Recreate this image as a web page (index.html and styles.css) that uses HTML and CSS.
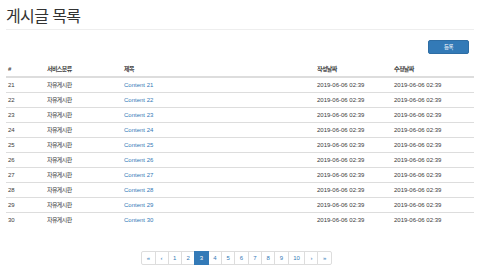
FILE: index.html
```html
<!DOCTYPE html>
<html lang="ko">
<head>
<meta charset="utf-8">
<title>게시글 목록</title>
<link rel="stylesheet" href="styles.css">
</head>
<body>
<div class="container">
  <h1 class="title">게시글 목록</h1>
  <hr class="divider">
  <div class="actions">
    <button class="btn-primary ko" type="button">등록</button>
  </div>
  <table class="board">
    <thead>
      <tr>
        <th class="c-no">#</th>
        <th class="c-cat ko">서비스분류</th>
        <th class="c-title ko">제목</th>
        <th class="c-date ko">작성날짜</th>
        <th class="c-mod ko">수정날짜</th>
      </tr>
    </thead>
    <tbody>
      <tr><td>21</td><td class="ko">자유게시판</td><td><a href="#">Content 21</a></td><td>2019-06-06 02:39</td><td>2019-06-06 02:39</td></tr>
      <tr><td>22</td><td class="ko">자유게시판</td><td><a href="#">Content 22</a></td><td>2019-06-06 02:39</td><td>2019-06-06 02:39</td></tr>
      <tr><td>23</td><td class="ko">자유게시판</td><td><a href="#">Content 23</a></td><td>2019-06-06 02:39</td><td>2019-06-06 02:39</td></tr>
      <tr><td>24</td><td class="ko">자유게시판</td><td><a href="#">Content 24</a></td><td>2019-06-06 02:39</td><td>2019-06-06 02:39</td></tr>
      <tr><td>25</td><td class="ko">자유게시판</td><td><a href="#">Content 25</a></td><td>2019-06-06 02:39</td><td>2019-06-06 02:39</td></tr>
      <tr><td>26</td><td class="ko">자유게시판</td><td><a href="#">Content 26</a></td><td>2019-06-06 02:39</td><td>2019-06-06 02:39</td></tr>
      <tr><td>27</td><td class="ko">자유게시판</td><td><a href="#">Content 27</a></td><td>2019-06-06 02:39</td><td>2019-06-06 02:39</td></tr>
      <tr><td>28</td><td class="ko">자유게시판</td><td><a href="#">Content 28</a></td><td>2019-06-06 02:39</td><td>2019-06-06 02:39</td></tr>
      <tr><td>29</td><td class="ko">자유게시판</td><td><a href="#">Content 29</a></td><td>2019-06-06 02:39</td><td>2019-06-06 02:39</td></tr>
      <tr><td>30</td><td class="ko">자유게시판</td><td><a href="#">Content 30</a></td><td>2019-06-06 02:39</td><td>2019-06-06 02:39</td></tr>
    </tbody>
  </table>
  <nav class="pager">
    <ul class="pagination">
      <li><a href="#">«</a></li>
      <li><a href="#">‹</a></li>
      <li><a href="#">1</a></li>
      <li><a href="#">2</a></li>
      <li class="active"><a href="#">3</a></li>
      <li><a href="#">4</a></li>
      <li><a href="#">5</a></li>
      <li><a href="#">6</a></li>
      <li><a href="#">7</a></li>
      <li><a href="#">8</a></li>
      <li><a href="#">9</a></li>
      <li><a href="#">10</a></li>
      <li><a href="#">›</a></li>
      <li><a href="#">»</a></li>
    </ul>
  </nav>
</div>
</body>
</html>
```

FILE: styles.css
```css
* { box-sizing: border-box; }
html, body { margin: 0; padding: 0; background: #fff; }
body {
  font-family: "Liberation Sans", Arial, "Noto Sans CJK KR", sans-serif;
  font-size: 6px;
  line-height: 8px;
  color: #3a3a3a;
}
.container { padding: 0 6px; }
.ko { letter-spacing: -0.6px; }
.title {
  margin: 5px 0 0;
  font-family: "Noto Sans CJK KR", sans-serif;
  font-size: 16px;
  line-height: 20px;
  font-weight: 400;
  letter-spacing: -0.6px;
  color: #333;
}
.divider {
  margin: 4px 0 0;
  border: 0;
  border-top: 1px solid #eee;
  height: 0;
}
.actions {
  display: flex;
  justify-content: flex-end;
  padding-right: 5px;
  margin-top: 10px;
}
.btn-primary {
  width: 41px;
  height: 14px;
  padding: 0;
  background: #337ab7;
  border: 1px solid #2e6da4;
  border-radius: 2px;
  color: #fff;
  font-family: "Liberation Sans", "Noto Sans CJK KR", sans-serif;
  font-size: 5.5px;
  line-height: 12px;
}
.board {
  width: 100%;
  margin-top: 8px;
  border-collapse: collapse;
  table-layout: fixed;
}
.board th, .board td {
  text-align: left;
  padding: 3px 2px;
  line-height: 8px;
  vertical-align: middle;
  white-space: nowrap;
}
.board th {
  font-weight: bold;
  color: #444;
  border-bottom: 2px solid #ddd;
}
.board td { border-top: 1px solid #ddd; }
.board tbody tr:first-child td { border-top: 0; }
.c-no { width: 39px; }
.c-cat { width: 77px; }
.c-title { width: 193px; }
.c-date { width: 77px; }
.c-mod { width: auto; }
.board a { color: #337ab7; text-decoration: none; }
.pager {
  display: flex;
  justify-content: center;
  margin-top: 24px;
  padding-right: 7px;
}
.pagination {
  display: flex;
  list-style: none;
  margin: 0;
  padding: 0;
}
.pagination li a {
  display: block;
  margin-left: -1px;
  padding: 2px 4.5px;
  min-width: 14px;
  text-align: center;
  line-height: 8px;
  border: 1px solid #ddd;
  color: #337ab7;
  text-decoration: none;
  background: #fff;
}
.pagination li:first-child a { margin-left: 0; border-radius: 2px 0 0 2px; }
.pagination li:last-child a { border-radius: 0 2px 2px 0; }
.pagination li.active a {
  background: #337ab7;
  border-color: #337ab7;
  color: #fff;
  position: relative;
}
```
